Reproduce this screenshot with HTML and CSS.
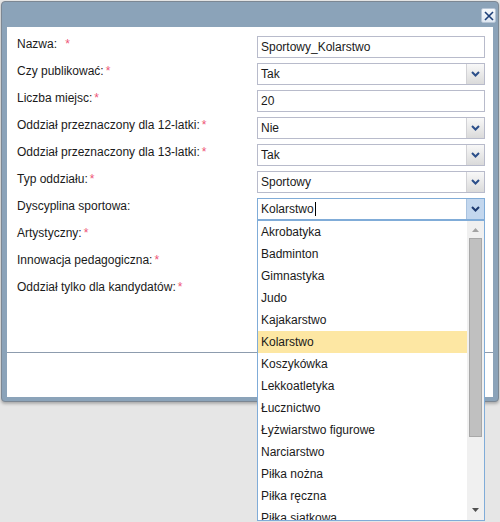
FILE: index.html
```html
<!DOCTYPE html>
<html lang="pl">
<head>
<meta charset="utf-8">
<title>Oddział</title>
<link rel="stylesheet" href="styles.css">
</head>
<body>
<div class="window">
  <div class="win-header">
    <button class="close" aria-label="Zamknij">
      <svg width="10" height="10" viewBox="0 0 10 10"><path d="M1 1 L9 9 M9 1 L1 9" stroke="#1d3f78" stroke-width="1.6" fill="none"/></svg>
    </button>
  </div>
  <div class="win-body">
    <form class="form">
      <div class="row">
        <label class="lbl">Nazwa: <span class="req wide">*</span></label>
        <div class="field text"><span class="val">Sportowy_Kolarstwo</span></div>
      </div>
      <div class="row">
        <label class="lbl">Czy publikować:<span class="req">*</span></label>
        <div class="field combo"><span class="val">Tak</span><span class="trigger"><svg width="9" height="6" viewBox="0 0 9 6"><path d="M1 1 L4.5 4.5 L8 1" stroke="#2c4f8a" stroke-width="2" fill="none"/></svg></span></div>
      </div>
      <div class="row">
        <label class="lbl">Liczba miejsc:<span class="req">*</span></label>
        <div class="field text"><span class="val">20</span></div>
      </div>
      <div class="row">
        <label class="lbl">Oddział przeznaczony dla 12-latki:<span class="req">*</span></label>
        <div class="field combo"><span class="val">Nie</span><span class="trigger"><svg width="9" height="6" viewBox="0 0 9 6"><path d="M1 1 L4.5 4.5 L8 1" stroke="#2c4f8a" stroke-width="2" fill="none"/></svg></span></div>
      </div>
      <div class="row">
        <label class="lbl">Oddział przeznaczony dla 13-latki:<span class="req">*</span></label>
        <div class="field combo"><span class="val">Tak</span><span class="trigger"><svg width="9" height="6" viewBox="0 0 9 6"><path d="M1 1 L4.5 4.5 L8 1" stroke="#2c4f8a" stroke-width="2" fill="none"/></svg></span></div>
      </div>
      <div class="row">
        <label class="lbl">Typ oddziału:<span class="req">*</span></label>
        <div class="field combo"><span class="val">Sportowy</span><span class="trigger"><svg width="9" height="6" viewBox="0 0 9 6"><path d="M1 1 L4.5 4.5 L8 1" stroke="#2c4f8a" stroke-width="2" fill="none"/></svg></span></div>
      </div>
      <div class="row">
        <label class="lbl">Dyscyplina sportowa:</label>
        <div class="field combo active"><span class="val">Kolarstwo<span class="caret"></span></span><span class="trigger"><svg width="9" height="6" viewBox="0 0 9 6"><path d="M1 1 L4.5 4.5 L8 1" stroke="#1d3a70" stroke-width="2" fill="none"/></svg></span>
          <div class="list">
            <ul class="items">
              <li>Akrobatyka</li>
              <li>Badminton</li>
              <li>Gimnastyka</li>
              <li>Judo</li>
              <li>Kajakarstwo</li>
              <li class="sel">Kolarstwo</li>
              <li>Koszykówka</li>
              <li>Lekkoatletyka</li>
              <li>Łucznictwo</li>
              <li>Łyżwiarstwo figurowe</li>
              <li>Narciarstwo</li>
              <li>Piłka nożna</li>
              <li>Piłka ręczna</li>
              <li>Piłka siatkowa</li>
            </ul>
            <div class="scrollbar">
              <span class="sb-btn"><svg width="7" height="4" viewBox="0 0 7 4"><path d="M0 4 L3.5 0 L7 4 Z" fill="#a3a3a3"/></svg></span>
              <span class="thumb"></span>
              <span class="sb-space"></span>
              <span class="sb-btn down"><svg width="7" height="4" viewBox="0 0 7 4"><path d="M0 0 L3.5 4 L7 0 Z" fill="#505050"/></svg></span>
            </div>
          </div>
        </div>
      </div>
      <div class="row">
        <label class="lbl">Artystyczny:<span class="req">*</span></label>
      </div>
      <div class="row">
        <label class="lbl">Innowacja pedagogiczna:<span class="req">*</span></label>
      </div>
      <div class="row">
        <label class="lbl">Oddział tylko dla kandydatów:<span class="req">*</span></label>
      </div>
    </form>
    <div class="footer"></div>
  </div>
</div>
</body>
</html>
```

FILE: styles.css
```css
html, body {
  margin: 0;
  padding: 0;
}
body {
  background: #e6e6e6;
  font-family: "Liberation Sans", Arial, sans-serif;
  font-size: 12px;
  color: #1a1a1a;
  width: 500px;
  height: 522px;
  overflow: hidden;
}
.window {
  margin: 1px 0 0 1px;
  width: 498px;
  height: 401px;
  box-sizing: border-box;
  border: 1px solid #7c8793;
  border-radius: 4px;
  background: #8ba3b9;
  padding: 0 5px 4px 5px;
  display: flex;
  flex-direction: column;
  box-shadow: 0 2px 3px rgba(0, 0, 0, 0.25);
}
.win-header {
  height: 25px;
  display: flex;
  justify-content: flex-end;
  align-items: center;
  margin-right: -3px;
}
.close {
  width: 15px;
  height: 15px;
  padding: 0;
  margin-top: 2px;
  border: 1px solid #b6c5d6;
  border-radius: 2px;
  background: linear-gradient(#f6f9fc, #dfe8f2);
  display: flex;
  align-items: center;
  justify-content: center;
}
.win-body {
  flex: 1;
  background: #fff;
  display: flex;
  flex-direction: column;
}
.form {
  height: 326px;
  box-sizing: border-box;
  padding: 9px 8px 0 10px;
  border-bottom: 1px solid #8d9cae;
  margin: 0;
}
.footer {
  flex: 1;
}
.row {
  display: grid;
  grid-template-columns: 1fr 228px;
  height: 23px;
  margin-bottom: 4px;
}
.lbl {
  line-height: 16px;
  padding-top: 0;
  white-space: nowrap;
}
.req {
  color: #ee5577;
  margin-left: 2px;
}
.req.wide {
  margin-left: 5px;
}
.field {
  position: relative;
  height: 22px;
  box-sizing: border-box;
  border: 1px solid #b8bbcb;
  background: #fff;
  display: flex;
  align-items: stretch;
}
.val {
  flex: 1;
  padding-left: 3px;
  line-height: 20px;
  display: flex;
  align-items: center;
}
.trigger {
  width: 17px;
  background: linear-gradient(#f8f8f8, #dadada);
  border-left: 1px solid #d2d2d6;
  display: flex;
  align-items: center;
  justify-content: center;
}
.combo.active {
  border-color: #80acd8;
}
.combo.active .trigger {
  background: #c3d7ee;
  border-left-color: #a9c3e0;
}
.caret {
  display: inline-block;
  width: 1px;
  height: 14px;
  background: #000;
  margin-left: 1px;
}
.list {
  position: absolute;
  left: -1px;
  right: -1px;
  top: 21px;
  height: 301px;
  box-sizing: border-box;
  border: 1px solid #80acd8;
  background: #fff;
  display: flex;
  overflow: hidden;
  z-index: 5;
}
.items {
  list-style: none;
  margin: 0;
  padding: 0;
  flex: 1;
}
.items li {
  height: 22px;
  line-height: 22px;
  padding-left: 3px;
  white-space: nowrap;
}
.items li.sel {
  background: #fde7a3;
}
.scrollbar {
  width: 17px;
  background: #f0f0f0;
  display: flex;
  flex-direction: column;
  align-items: center;
}
.sb-btn {
  height: 17px;
  width: 17px;
  display: flex;
  align-items: center;
  justify-content: center;
  flex: none;
}
.thumb {
  width: 13px;
  height: 199px;
  box-sizing: border-box;
  background: #c0c0c0;
  border: 1px solid #a8a8a8;
  flex: none;
}
.sb-space {
  flex: 1;
}
.sb-btn.down {
  height: 20px;
}
```
